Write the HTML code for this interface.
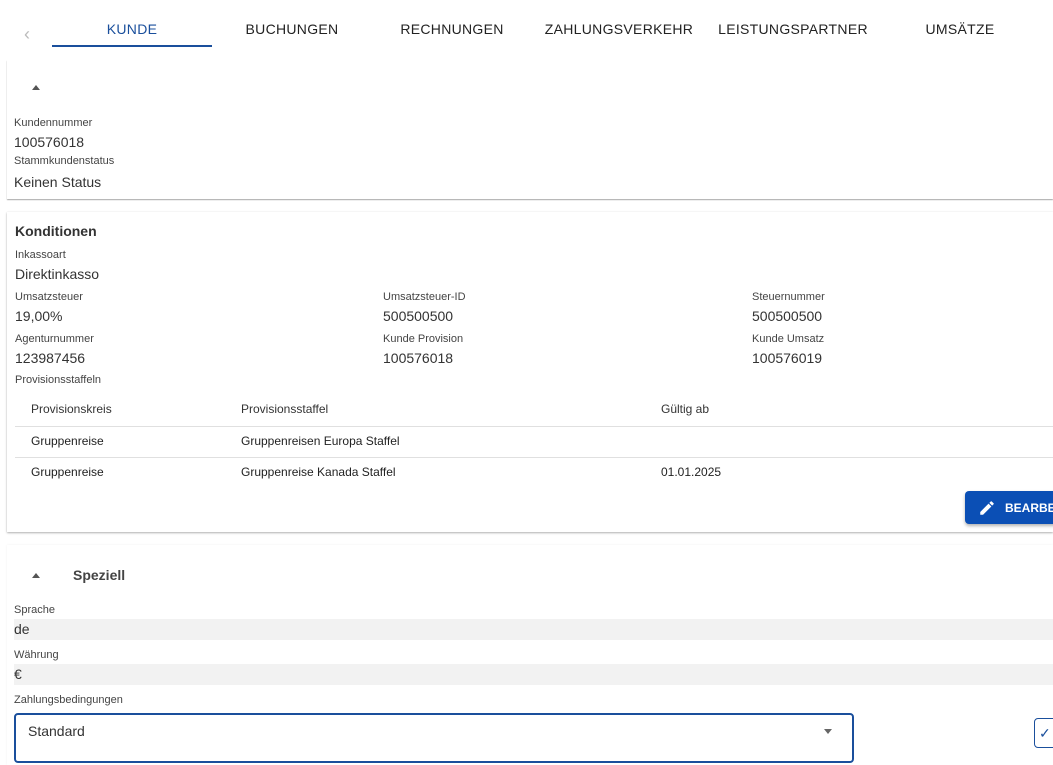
<!DOCTYPE html>
<html><head><meta charset="utf-8"><style>
*{margin:0;padding:0;box-sizing:border-box}
body{width:1053px;height:752px;overflow:hidden;background:#fff;font-family:"Liberation Sans",Arial,sans-serif;color:#333;position:relative}
.a{position:absolute;white-space:nowrap}
.tab{position:absolute;top:21px;font-size:14px;color:#222;text-align:center;letter-spacing:.3px}
.lbl{font-size:11px;color:#444}
.val{font-size:14px;color:#333}
.card{position:absolute;left:7px;right:0;background:#fff;box-shadow:0 1px 2px rgba(0,0,0,.3),0 0 1px rgba(0,0,0,.08)}
.th{font-size:12px;color:#333}
.td{font-size:12px;color:#222}
.hr{position:absolute;left:15px;right:0;height:1px;background:#e0e0e0}
.gray{position:absolute;left:14px;right:0;height:21px;background:#f2f2f2}
.tri{position:absolute;width:0;height:0;border-left:4px solid transparent;border-right:4px solid transparent;border-bottom:5px solid #555}
</style></head><body>
<div class="a" style="left:24px;top:24px;color:#bbb;font-size:18px">&#8249;</div>
<div class="tab" style="left:52px;width:160px;color:#1a4f9c">KUNDE</div>
<div class="a" style="left:52px;top:45px;width:160px;height:2px;background:#1a4f9c"></div>
<div class="tab" style="left:212px;width:160px">BUCHUNGEN</div>
<div class="tab" style="left:372px;width:160px">RECHNUNGEN</div>
<div class="tab" style="left:540px;width:158px">ZAHLUNGSVERKEHR</div>
<div class="tab" style="left:712px;width:162px">LEISTUNGSPARTNER</div>
<div class="tab" style="left:880px;width:160px">UMSÄTZE</div>

<div class="card" style="top:60px;height:139px;box-shadow:0 1px 1px rgba(0,0,0,.35)"></div>
<div class="tri" style="left:32px;top:85px"></div>
<div class="a lbl" style="left:14px;top:117px">Kundennummer</div>
<div class="a val" style="left:14px;top:134px">100576018</div>
<div class="a lbl" style="left:14px;top:155px">Stammkundenstatus</div>
<div class="a val" style="left:14px;top:174px">Keinen Status</div>

<div class="card" style="top:212px;height:320px"></div>
<div class="a" style="left:15px;top:223px;font-size:14px;font-weight:bold;color:#333">Konditionen</div>
<div class="a lbl" style="left:15px;top:249px">Inkassoart</div>
<div class="a val" style="left:15px;top:266px">Direktinkasso</div>
<div class="a lbl" style="left:15px;top:291px">Umsatzsteuer</div>
<div class="a val" style="left:15px;top:308px">19,00%</div>
<div class="a lbl" style="left:383px;top:291px">Umsatzsteuer-ID</div>
<div class="a val" style="left:383px;top:308px">500500500</div>
<div class="a lbl" style="left:752px;top:291px">Steuernummer</div>
<div class="a val" style="left:752px;top:308px">500500500</div>
<div class="a lbl" style="left:15px;top:333px">Agenturnummer</div>
<div class="a val" style="left:15px;top:350px">123987456</div>
<div class="a lbl" style="left:383px;top:333px">Kunde Provision</div>
<div class="a val" style="left:383px;top:350px">100576018</div>
<div class="a lbl" style="left:752px;top:333px">Kunde Umsatz</div>
<div class="a val" style="left:752px;top:350px">100576019</div>
<div class="a lbl" style="left:15px;top:374px">Provisionsstaffeln</div>
<div class="a th" style="left:31px;top:402px">Provisionskreis</div>
<div class="a th" style="left:241px;top:402px">Provisionsstaffel</div>
<div class="a th" style="left:661px;top:402px">Gültig ab</div>
<div class="hr" style="top:426px"></div>
<div class="a td" style="left:31px;top:434px">Gruppenreise</div>
<div class="a td" style="left:241px;top:434px">Gruppenreisen Europa Staffel</div>
<div class="hr" style="top:457px"></div>
<div class="a td" style="left:31px;top:465px">Gruppenreise</div>
<div class="a td" style="left:241px;top:465px">Gruppenreise Kanada Staffel</div>
<div class="a td" style="left:661px;top:465px">01.01.2025</div>
<div class="a" style="left:965px;top:491px;width:100px;height:33px;background:#0b4fb5;border-radius:4px;box-shadow:0 2px 3px rgba(0,0,0,.3)">
<svg style="position:absolute;left:13px;top:8px" width="18" height="18" viewBox="0 0 24 24"><path fill="#fff" d="M3 17.25V21h3.75L17.81 9.94l-3.75-3.75L3 17.25zM20.71 7.04a1 1 0 0 0 0-1.41l-2.34-2.34a1 1 0 0 0-1.41 0l-1.83 1.83 3.75 3.75 1.83-1.83z"/></svg>
<span class="a" style="left:40px;top:10px;color:#fff;font-size:12px;font-weight:bold">BEARBEITEN</span></div>

<div class="card" style="top:545px;height:220px;box-shadow:0 0 2px rgba(0,0,0,.06)"></div>
<div class="tri" style="left:32px;top:573px"></div>
<div class="a" style="left:73px;top:567px;font-size:14px;font-weight:bold;color:#444">Speziell</div>
<div class="a lbl" style="left:14px;top:604px">Sprache</div>
<div class="gray" style="top:619px"></div>
<div class="a val" style="left:14px;top:621px">de</div>
<div class="a lbl" style="left:14px;top:649px">Währung</div>
<div class="gray" style="top:664px"></div>
<div class="a val" style="left:14px;top:666px">€</div>
<div class="a lbl" style="left:14px;top:694px">Zahlungsbedingungen</div>
<div class="a" style="left:14px;top:713px;width:840px;height:50px;border:2px solid #1a4f9c;border-radius:4px"></div>
<div class="a val" style="left:28px;top:723px">Standard</div>
<div class="a" style="left:824px;top:729px;border-left:4px solid transparent;border-right:4px solid transparent;border-top:5px solid #666"></div>
<div class="a" style="left:1034px;top:718px;width:30px;height:30px;border:1px solid #1a4f9c;border-radius:4px;color:#1a4f9c;font-size:14px;padding:6px 4px">✓</div>
</body></html>
